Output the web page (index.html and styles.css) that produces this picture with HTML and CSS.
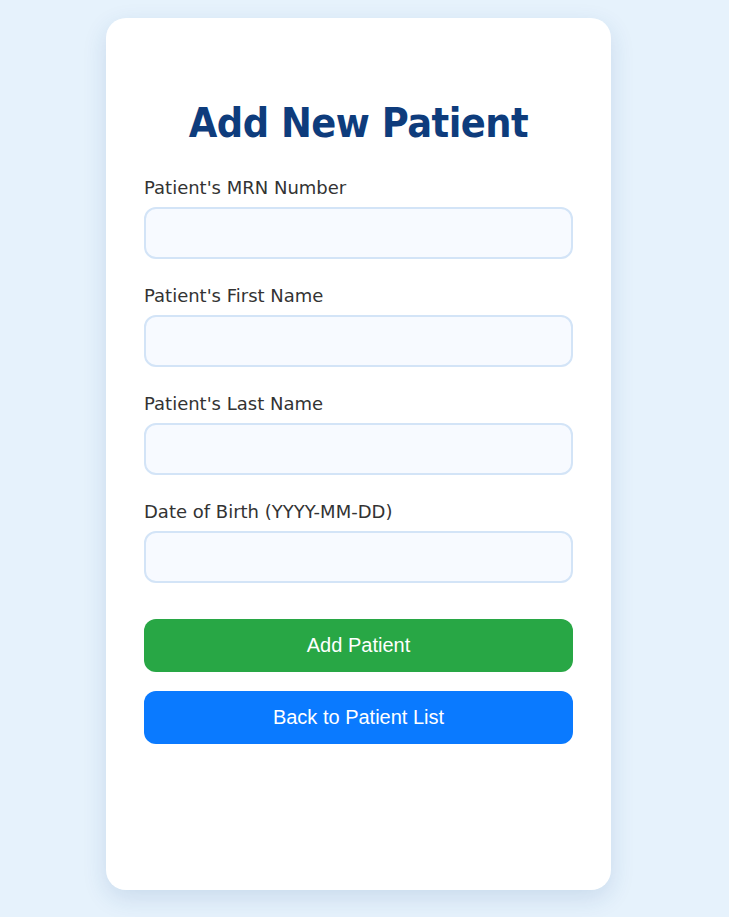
FILE: index.html
```html
<!DOCTYPE html>
<html lang="en">
<head>
<meta charset="utf-8">
<title>Add New Patient</title>
<link rel="stylesheet" href="styles.css">
</head>
<body>
<main class="card">
  <h1 class="title">Add New Patient</h1>
  <form class="form">
    <div class="field">
      <label class="label" for="mrn">Patient's MRN Number</label>
      <input class="input" id="mrn" type="text">
    </div>
    <div class="field">
      <label class="label" for="first">Patient's First Name</label>
      <input class="input" id="first" type="text">
    </div>
    <div class="field">
      <label class="label" for="last">Patient's Last Name</label>
      <input class="input" id="last" type="text">
    </div>
    <div class="field">
      <label class="label" for="dob">Date of Birth (YYYY-MM-DD)</label>
      <input class="input" id="dob" type="text">
    </div>
    <div class="actions">
      <button class="btn btn-green" type="button">Add Patient</button>
      <button class="btn btn-blue" type="button">Back to Patient List</button>
    </div>
  </form>
</main>
</body>
</html>
```

FILE: styles.css
```css
html, body {
  margin: 0;
  padding: 0;
}
body {
  background: #e6f2fc;
  font-family: "DejaVu Sans", Verdana, sans-serif;
  padding-top: 18px;
  padding-bottom: 27px;
}
.card {
  box-sizing: border-box;
  width: 505px;
  height: 872px;
  margin-left: 106px;
  background: #ffffff;
  border-radius: 20px;
  box-shadow: 0 8px 24px rgba(30, 80, 140, 0.14);
  padding: 81px 38px 0;
}
.title {
  margin: 0 0 30px;
  text-align: center;
  color: #0e3c7c;
  font-family: "DejaVu Sans Condensed", "DejaVu Sans", sans-serif;
  font-stretch: condensed;
  font-size: 41px;
  line-height: 48px;
  font-weight: bold;
  letter-spacing: -0.5px;
}
.form {
  display: flex;
  flex-direction: column;
}
.field {
  display: flex;
  flex-direction: column;
  margin-bottom: 26px;
}
.label {
  color: #333333;
  font-size: 18px;
  line-height: 22px;
  margin-bottom: 8px;
}
.input {
  box-sizing: border-box;
  height: 52px;
  width: 100%;
  border: 2px solid #d3e4f7;
  border-radius: 12px;
  background: #f7faff;
  margin: 0;
}
.actions {
  display: flex;
  flex-direction: column;
  gap: 19px;
  margin-top: 10px;
}
.btn {
  height: 53px;
  border: none;
  border-radius: 12px;
  color: #ffffff;
  font-family: "Liberation Sans", Arial, sans-serif;
  font-size: 20px;
}
.btn-green { background: #28a745; }
.btn-blue { background: #0a7aff; }
```
